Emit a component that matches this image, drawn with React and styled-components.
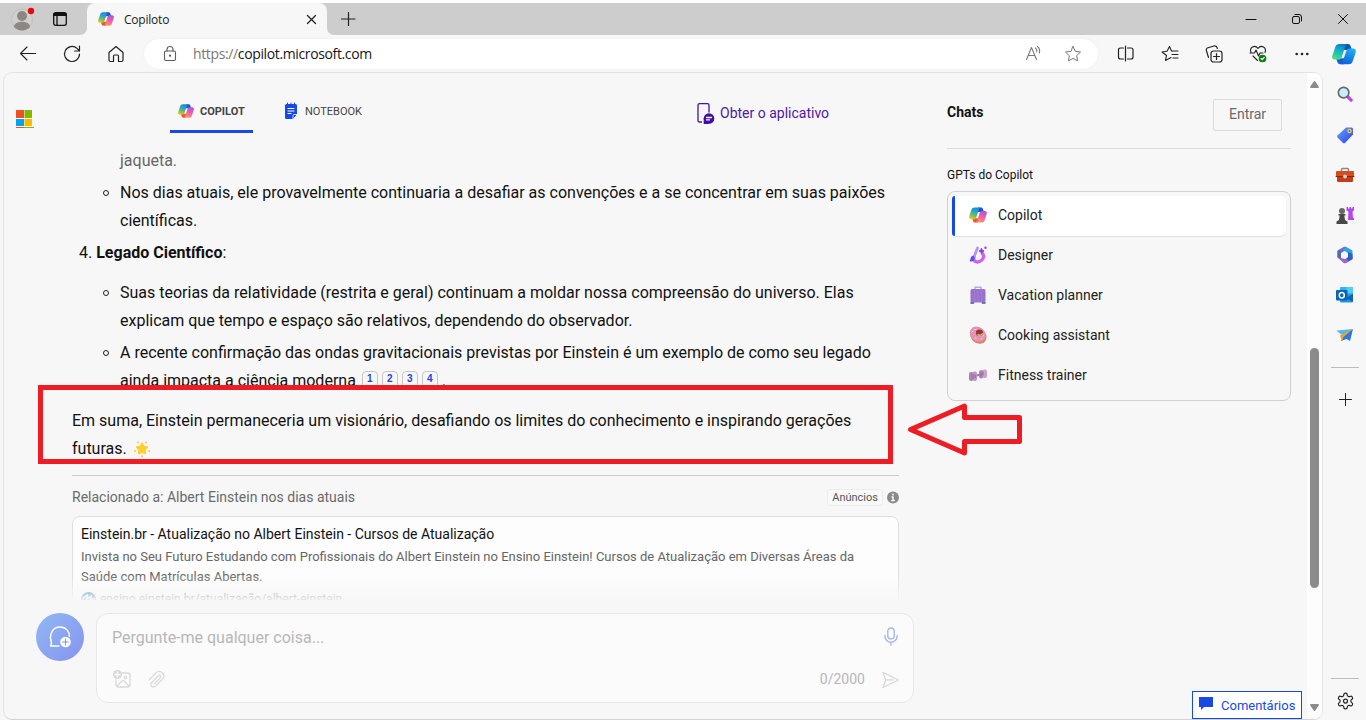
import React from "react";
import styled, { createGlobalStyle } from "styled-components";

const Global = createGlobalStyle`
  *, *::before { box-sizing: border-box; }
  body { margin: 0; background: #f7f7f7; font-family: Roboto, "Liberation Sans", sans-serif; overflow: hidden; }
`;

const UI_FONT = `"Open Sans", "Noto Sans", sans-serif`;

const Window = styled.div`
  width: 1366px; height: 720px; display: flex; flex-direction: column; position: relative;
  background: #f7f7f7; overflow: hidden; border-top: 3px solid #fff;
`;
const Icon = styled.svg`
  display: block; flex: none; overflow: visible;
  width: ${p => p.$w || 18}px; height: ${p => p.$h || p.$w || 18}px;
  fill: none; stroke: ${p => p.$c || "none"}; stroke-width: ${p => p.$s || 1};
  stroke-linecap: round; stroke-linejoin: round;
`;
const Cell = styled.div`
  width: ${p => p.$w || 44}px; height: ${p => p.$h || 37}px; flex: none;
  display: flex; align-items: center; justify-content: center;
`;

/* Title bar */
const TitleBar = styled.div` height: 32px; flex: none; display: flex; background: #f7f7f7; `;
const CapHolder = styled.div` width: 95px; margin-right: -8px; background: linear-gradient(#cdcdcd 50%, #f7f7f7 50%); `;
const LeftCap = styled.div`
  width: 87px; height: 32px; display: flex; align-items: center; background: #cdcdcd;
  border-bottom-right-radius: 7px; padding-left: 11px; gap: 19px;
`;
const TabHolder = styled.div` background: linear-gradient(#cdcdcd 50%, #f7f7f7 50%); width: 240px; `;
const Tab = styled.div`
  height: 32px; background: #f7f7f7; border-radius: 8px 8px 0 0; display: flex; align-items: center;
  padding: 0 11px 0 11px; font: 12px ${UI_FONT}; color: #1b1b1b;
`;
const TabTitle = styled.span` flex: 1; margin-left: 10px; letter-spacing: -0.22px; `;
const RightCap = styled.div`
  flex: 1; display: flex; align-items: center; background: #cdcdcd; border-bottom-left-radius: 7px; padding-left: 14px;
`;
const WindowButtons = styled.div` margin-left: auto; display: flex; `;

/* Toolbar */
const Toolbar = styled.div` height: 37px; flex: none; display: flex; padding-left: 6px; align-items: center; `;
const Address = styled.div`
  width: 954px; height: 30px; margin: 0 6px; border-radius: 15px; background: #fff; display: flex; align-items: center;
  padding: 0 16px 0 19px; font: 14px ${UI_FONT}; color: #161616; box-shadow: 0 0 2px #e8e8e8;
`;
const Url = styled.span` flex: 1; margin-left: 16px; letter-spacing: -0.37px; `;
const Scheme = styled.span` color: #777; `;
const AddressActions = styled.div` display: flex; gap: 22px; `;

/* Body */
const Body = styled.div` flex: 1; min-height: 0; display: flex; padding: 0 0 0 3px; `;
const Frame = styled.div`
  width: 1320px; border: 1px solid #e3e3e3; border-bottom-color: #d3d3d3; border-radius: 9px; overflow: hidden; display: flex; flex: none;
`;
const Main = styled.main` width: 943px; flex: none; display: flex; flex-direction: column; `;
const Header = styled.header` height: 73px; flex: none; display: flex; padding-left: 12px; `;
const MsLogo = styled.div` width: 154px; padding-top: 37px; `;
const NavTab = styled.div`
  width: ${p => p.$w}px; height: 40px; margin: 20px 0 0 ${p => p.$ml || 0}px; display: flex; align-items: center; gap: ${p => p.$gap || 6}px;
  padding: 0 0 1px 8px; font-size: 11px; font-weight: ${p => (p.$on ? 700 : 400)}; color: #444;
  border-bottom: 3px solid ${p => (p.$on ? "#174ae4" : "transparent")};
`;
const AppLink = styled.div`
  margin: 29px 0 0 290px; height: 22px; display: flex; align-items: center; gap: 5px; color: #4f17a5; font-size: 14px;
`;
const Scroller = styled.div`
  height: 454px; flex: none; overflow: hidden; position: relative; padding: 1px 0 0 68px; color: #111; font-size: 16px; line-height: 28px;
`;
const Line = styled.div` height: 28px; white-space: nowrap; `;
const Bullet = styled.div`
  padding-left: 48px; position: relative; margin-bottom: 4px; color: ${p => (p.$faded ? "#666" : "#111")};
  &::before {
    content: ""; display: ${p => (p.$faded ? "none" : "block")}; position: absolute; left: 31px; top: 11px;
    width: 6px; height: 6px; border: 1px solid #222; border-radius: 50%;
  }
`;
const Heading = styled.div` padding-left: 7px; height: 28px; margin-bottom: 12px; `;
const Cites = styled.span` margin-left: 2px; `;
const Cite = styled.sup`
  display: inline-block; width: 16px; height: 17px; margin-right: 4px; border: 1px solid #c6c6c6; border-radius: 4px; vertical-align: 4px;
  font: 700 10px/14px "Liberation Sans", sans-serif; color: #2443df; text-align: center;
`;
const Highlight = styled.div`
  position: relative; z-index: 1; width: 855px; height: 79px; margin: -14px 0 0 -34px; padding: 17px 0 0 29px;
  border: 5px solid #ee1c25; background: #f7f7f7;
`;
const StarLine = styled(Line)` display: flex; align-items: center; gap: 7px; `;
const Related = styled.div`
  margin-top: 11px; width: 827px; height: 41px; border-top: 1px solid #cbcbcb; display: flex; align-items: center;
  font-size: 14px; color: #6a6a6a; padding-top: 2px;
`;
const AdPill = styled.span`
  margin-left: auto; margin-right: 4px; height: 17px; border: 1px solid #ececec; border-radius: 4px; padding: 0 4px;
  font-size: 11px; line-height: 16px; color: #555; background: #f9f9f9;
`;
const Ad = styled.div`
  width: 827px; height: 110px; border: 1px solid #dfdfdf; border-radius: 8px; background: #fdfdfd; padding: 6px 8px;
`;
const AdTitle = styled.div` font-size: 14px; line-height: 22px; color: #111; margin-bottom: 2px; `;
const AdText = styled.div` font-size: 13px; line-height: 20px; color: #666; white-space: nowrap; `;
const AdUrl = styled(AdText)` display: flex; align-items: center; gap: 4px; height: 22px; font-size: 12px; padding-top: 2px; `;
const Fade = styled.div`
  position: absolute; left: 40px; right: 0; bottom: 0; height: 26px; background: linear-gradient(#f7f7f700, #f7f7f7e6);
`;
const Composer = styled.div` display: flex; padding: 13px 0 0 32px; gap: 12px; `;
const NewTopic = styled.div`
  width: 48px; height: 48px; border-radius: 50%; background: linear-gradient(135deg, #90b9f2, #8793f0);
  display: flex; align-items: center; justify-content: center;
`;
const Input = styled.div`
  width: 818px; height: 90px; border: 1px solid #e7e7e7; border-radius: 12px; background: #fbfbfb;
  padding: 9px 14px 9px 15px; display: flex; flex-direction: column; justify-content: space-between; color: #b7b7b7; font-size: 16px;
`;
const PromptRow = styled.div` display: flex; align-items: center; justify-content: space-between; height: 28px; padding-right: 1px; `;
const ToolRow = styled.div` display: flex; align-items: center; height: 28px; gap: 17px; padding-left: 1px; `;
const Counter = styled.span` margin-left: auto; font-size: 14px; letter-spacing: 0.02px; `;

const Aside = styled.aside` width: 360px; flex: none; display: flex; flex-direction: column; `;
const AsideTop = styled.div`
  width: 344px; height: 76px; border-bottom: 1px solid #dadada; display: flex; justify-content: space-between; padding: 26px 9px 0 0;
`;
const ChatsTitle = styled.div` font-size: 14px; font-weight: 700; color: #111; line-height: 26px; `;
const SignIn = styled.div`
  width: 69px; height: 32px; border: 1px solid #dadada; border-radius: 2px; color: #6a6a6a; font-size: 14px; line-height: 29px; text-align: center;
`;
const GptLabel = styled.div` height: 42px; padding-top: 18px; font-size: 12px; line-height: 16px; color: #111; `;
const GptList = styled.div` width: 344px; height: 210px; border: 1px solid #d1d1d1; border-radius: 8px; padding: 4px; `;
const GptItem = styled.div`
  height: 40px; display: flex; align-items: center; gap: 11px; padding: 0 0 2px 14px; font-size: 14px; color: #222;
  border-left: 3px solid ${p => (p.$on ? "#174ae4" : "transparent")}; border-radius: 3px 6px 6px 3px;
  background: ${p => (p.$on ? "#fff" : "transparent")}; box-shadow: ${p => (p.$on ? "0 1px 1px #dedede" : "none")};
`;
const Feedback = styled.div`
  width: 110px; height: 28px; margin: auto 0 0 245px; border: 1px solid #174ae4; background: #fff; color: #174ae4;
  display: flex; align-items: center; padding: 0 0 0 6px; gap: 8px; font-size: 13px;
`;
const FlagIcon = styled(Icon)` margin-top: -3px; `;
const Scrollbar = styled.div`
  width: 15px; background: #fdfdfd; display: flex; flex-direction: column; align-items: flex-start; padding: 8px 0 8px 3px;
`;
const Thumb = styled.div` width: 9px; height: 240px; margin-top: 260px; margin-bottom: auto; border-radius: 5px; background: #8b8b8b; `;

const Rail = styled.div` flex: 1; display: flex; flex-direction: column; align-items: center; padding: 2px 3px 0 0; `;
const RailLine = styled.div` width: 28px; height: 1px; flex: none; background: #bcbcbc; margin-top: ${p => p.$top || "0"}; `;

const Arrow = styled(Icon)` position: absolute; left: 905px; top: 397px; `;

const CopilotLogo = ({ size = 18, id, cool }) => (
  <Icon viewBox="0 0 24 24" $w={size}>
    <defs>
      <linearGradient id={id + "a"} x1="12" y1="1" x2="5" y2="19" gradientUnits="userSpaceOnUse">
        <stop offset="0" stopColor={cool ? "#0877bb" : "#1686dc"} />
        <stop offset=".4" stopColor={cool ? "#18a9cf" : "#27a8cf"} />
        <stop offset=".7" stopColor={cool ? "#27cf9f" : "#7fc14a"} />
        <stop offset="1" stopColor={cool ? "#5fdc7a" : "#f8c41f"} />
      </linearGradient>
      <linearGradient id={id + "b"} x1="20" y1="5" x2="13" y2="23" gradientUnits="userSpaceOnUse">
        <stop offset="0" stopColor={cool ? "#28b4ef" : "#a550ee"} />
        <stop offset=".5" stopColor={cool ? "#178ae8" : "#ed5daa"} />
        <stop offset="1" stopColor={cool ? "#1261d9" : "#ff9c66"} />
      </linearGradient>
    </defs>
    <g transform="translate(0 1) scale(1 .92)">
      <path d="M12 1h4c1.400 0 2.200 1 2.600 2.400L20 7.500H11.500z" fill={cool ? "#0a58b4" : "#1959cf"} />
      <path d="M12 23H8c-1.400 0-2.200-1-2.600-2.400L4 16.500H12.500z" fill={cool ? "#1460d8" : "#f0552f"} />
      <path d="M7.500 1H15.500c-1 0-1.600.8-2 2L9.700 15.400C9.200 17 8.200 18 6.500 18H3.300C.3 18-.3 15.800.4 13.500L3.200 4.500C3.900 2.200 5.200 1 7.500 1z" fill={`url(#${id}a)`} />
      <path d="M16.500 23H8.500c1 0 1.600-.8 2-2l3.800-12.400C14.800 7 15.800 6 17.500 6h3.200c3 0 3.600 2.200 2.900 4.500l-2.800 9c-.7 2.300-2 3.500-4.300 3.500z" fill={`url(#${id}b)`} />
    </g>
  </Icon>
);

const Avatar = () => (
  <Icon viewBox="0 0 23 23" $w={23}>
    <circle cx="11" cy="11.500" r="10.500" fill="#d2cfcc" stroke="#c2bfbc" />
    <circle cx="11" cy="8" r="5" fill="#8b8783" />
    <path d="M3 19c0-7 16-7 16 0-4 4.500-12 4.500-16 0z" fill="#8b8783" />
    <circle cx="20" cy="3" r="3.200" fill="#e60c0c" />
  </Icon>
);

const gpts = [
  ["Copilot", <CopilotLogo size={18} id="g" />],
  ["Designer",
    <Icon viewBox="0 0 18 18" $w={18}>
      <path d="M5 10.500c-1.500 4.500 2 6.300 5.500 5 4-1.500 5-5 3-8" stroke="#cf62f3" strokeWidth="3.400" />
      <path d="M8.500 2L5 11" stroke="#b596f2" strokeWidth="2.800" />
      <path d="M3.500 10c2 0 3 2 1.500 4-1 1.500-3 2-4.500 1 1.500-1 .5-4.500 3-5z" fill="#5f52e2" />
      <path d="M12.500 2.500l.7 1.700 1.800.8-1.800.8-.7 1.700-.8-1.700-1.700-.8 1.700-.8z" fill="#7c3de4" stroke="#7c3de4" /><circle cx="16.500" cy="1.800" r="1.200" fill="#8951e7" />
    </Icon>],
  ["Vacation planner",
    <Icon viewBox="0 0 18 18" $w={18}>
      <path d="M6 3V1.200h6V3" stroke="#a9b6d3" strokeWidth="1.500" />
      <rect x="1.500" y="3" width="15" height="13.500" rx="1.500" fill="#9872cd" />
      <path d="M5.500 4.500v11M9 4.500v11M12.500 4.500v11" stroke="#a27dd5" strokeWidth=".9" /><path d="M2 17h2.500M13.500 17H16" stroke="#355b91" strokeWidth="1.600" />
    </Icon>],
  ["Cooking assistant",
    <Icon viewBox="0 0 18 18" $w={18}>
      <ellipse cx="9.500" cy="10" rx="8.500" ry="7.300" fill="#d0895a" transform="rotate(35 9.500 10)" />
      <ellipse cx="9" cy="8.200" rx="8.600" ry="7" fill="#e692b4" transform="rotate(35 9 8)" />
      <ellipse cx="10.500" cy="6.800" rx="3.600" ry="3.200" fill="#963a2f" /><path d="M9 8.500c1.500 1.300 3.500.8 4.300-.8" stroke="#eabb8c" strokeWidth="1.300" />
      <path d="M3 6l1-.8M6 12l1 .5M12 13l1-.6M6 3.500h1M14 10l.5-1" stroke="#fbd9e6" />
    </Icon>],
  ["Fitness trainer",
    <Icon viewBox="0 0 18 18" $w={18}>
      <path d="M6 10l7-2" stroke="#8d8698" strokeWidth="2" />
      <rect x="0" y="6" width="4.500" height="9" rx="2" fill="#ad83b3" /><rect x="3.500" y="5.500" width="4.500" height="9.500" rx="2" fill="#c095c6" />
      <rect x="10" y="4" width="4.500" height="8.500" rx="2" fill="#b189b8" /><rect x="13.500" y="3.500" width="4.500" height="8.500" rx="2" fill="#cda0d0" />
      <path d="M4 8.500v4M6.200 9v2.500M12 7v3M14 6v3" stroke="#80618d" strokeWidth=".9" />
    </Icon>],
];

const STAR = "M9 1.500l2.300 4.800 5.200.7-3.800 3.700.9 5.200L9 13.400l-4.600 2.500.9-5.200L1.500 7l5.200-.7z";

const RailIcons = () => (
  <>
    <Cell $h={40}><Icon viewBox="0 0 18 18" $w={17}>
      <path d="M11 11l5 5" stroke="#c43df0" strokeWidth="3.200" strokeLinecap="butt" /><circle cx="7" cy="7" r="5.600" fill="#c9ecff" stroke="#666" strokeWidth="1.700" />
    </Icon></Cell>
    <Cell $h={41}><Icon viewBox="0 0 18 18" $w={18}>
      <defs><linearGradient id="tg" x2="1" y2="1"><stop stopColor="#69a4ff" /><stop offset="1" stopColor="#293fe5" /></linearGradient></defs>
      <path d="M10 1.500h5.500q1.500 0 1.500 1.500v5.500L9 17q-1 .8-2 0L1.500 11.500q-.8-1 0-2z" fill="url(#tg)" /><circle cx="13.500" cy="5" r="1.600" fill="#3b67df" stroke="#ffd23b" strokeWidth="1.300" />
    </Icon></Cell>
    <Cell $h={40}><Icon viewBox="0 0 18 18" $w={18}>
      <path d="M5.500 6V3.500q0-1 1-1h5q1 0 1 1V6" stroke="#888" strokeWidth="1.500" /><rect y="5" width="18" height="6" rx="1" fill="#d64d1c" /><path d="M1 10.500h16V15q0 1-1 1H2q-1 0-1-1z" fill="#c13f17" /><path d="M0 10.500h18" stroke="#87270d" /><circle cx="9" cy="10.500" r="2" fill="#c9cfd3" />
    </Icon></Cell>
    <Cell $h={40}><Icon viewBox="0 0 18 18" $w={18}>
      <path d="M10.500 1h1.500v1.500h1.500V1H15v1.500h1.500V1H18v3.500l-1.500 1L17 12h1v2h-6l.5-8.500-2-1z" fill="#b445f0" /><circle cx="6" cy="5" r="3" fill="#676767" /><path d="M2.500 8h7v1.500H8.300L9 14l2.500 1.500V18H.5v-2.500L3 14l.7-4.500H2.500z" fill="#484848" />
    </Icon></Cell>
    <Cell $h={40}><Icon viewBox="0 0 18 18" $w={18}>
      <path d="M8 .8L1.500 4.500v7L5 13.500V7l5-3V.8z" fill="#736bd3" /><path d="M10 .8l6.500 3.700v8L12 10V7L7 4z" fill="#29a8dc" /><path d="M1.500 11.500L8 17.200h2l6.500-4v-3L9 13l-4-1z" fill="#9869cc" /><path d="M12 6l4.500 2v5l-4 2.300-2.500-3 2-1z" fill="#315fbd" /><path d="M5 4v8.500L1.500 11V5z" fill="#536dac" />
    </Icon></Cell>
    <Cell $h={40}><Icon viewBox="0 0 18 18" $w={18}>
      <rect x="4" y="1" width="13" height="12" rx="1" fill="#31b4e9" /><path d="M10.500 1H17v6h-6.500z" fill="#52cef5" /><path d="M4 9l13-1v7q0 1.500-1.500 1.500H5Q4 16.500 4 15z" fill="#2297df" /><path d="M10 12l7-4v8z" fill="#165fa9" /><rect y="4" width="11.500" height="10.500" rx="1" fill="#0864b8" /><ellipse cx="5.800" cy="9.200" rx="2.500" ry="2.800" stroke="#fff" strokeWidth="1.500" />
    </Icon></Cell>
    <Cell $h={40}><Icon viewBox="0 0 18 18" $w={18}>
      <path d="M.5 4.500L17 3l-7.500 6-4.500-.5z" fill="#55b9ef" /><path d="M17 3l-3 12-3.500-2L5 15l2.500-6z" fill="#277bdf" /><path d="M17 3L4 9.500l2 5.500 1.500-4z" fill="#f4a11e" />
    </Icon></Cell>
  </>
);

export default function App() {
  return (
    <Window>
      <Global />
      <TitleBar>
        <CapHolder>
          <LeftCap>
            <Avatar />
            <Icon viewBox="0 0 14 14" $w={14} $c="#111" $s={1.3}><rect x=".7" y=".7" width="12.600" height="12.600" rx="2" /><path d="M1.500 2.500h11" strokeWidth="3" /><path d="M4 4v9" /></Icon>
          </LeftCap>
        </CapHolder>
        <TabHolder>
          <Tab>
            <CopilotLogo id="t" size={16} />
            <TabTitle>Copiloto</TabTitle>
            <Icon viewBox="0 0 10 10" $w={9} $c="#222" $s={1.4}><path d="M.5.5l9 9M9.500.5l-9 9" /></Icon>
          </Tab>
        </TabHolder>
        <RightCap>
          <Icon viewBox="0 0 14 14" $w={14} $c="#222" $s={1.2}><path d="M7.500 .5v13M.5 7h13.500" /></Icon>
          <WindowButtons>
            <Cell $w={46} $h={32}><Icon viewBox="0 0 10 10" $w={10} $c="#111"><path d="M0 5.500h10" /></Icon></Cell>
            <Cell $w={46} $h={32}><Icon viewBox="0 0 10 10" $w={10} $c="#111"><rect x=".5" y="2.500" width="7" height="7" rx="1.500" /><path d="M3 .5h4q2.500 0 2.500 2.500v4" /></Icon></Cell>
            <Cell $w={46} $h={32}><Icon viewBox="0 0 10 10" $w={10} $c="#111"><path d="M.5.5l9 9M9.500.5l-9 9" /></Icon></Cell>
          </WindowButtons>
        </RightCap>
      </TitleBar>

      <Toolbar>
        <Cell><Icon viewBox="0 0 18 18" $c="#222" $s={1.1}><path d="M16.500 8.500H1.500M8 2L1.500 8.500 8 15" /></Icon></Cell>
        <Cell><Icon viewBox="0 0 18 18" $c="#222" $s={1.2}><path d="M16.500 9A7.500 7.500 0 1 1 14 3.400L16.500 6M16.500 1v5h-5" /></Icon></Cell>
        <Cell><Icon viewBox="0 0 18 18" $c="#222" $s={1.2}><path d="M2 7.500L9 1.500l7 6V15q0 1.500-1.500 1.500h-3V11q0-1-1-1h-3q-1 0-1 1v5.500h-3Q2 16.500 2 15z" /></Icon></Cell>
        <Address>
          <Icon viewBox="0 0 14 16" $w={14} $h={16} $c="#5c5c5c" $s={1.1}><rect x="1.500" y="5" width="11" height="9.500" rx="1.500" /><path d="M4 5V3.500q0-3 3-3t3 3V5" /><circle cx="7" cy="9.700" r=".6" fill="#555" /></Icon>
          <Url><Scheme>https://</Scheme>copilot.microsoft.com</Url>
          <AddressActions>
            <Icon viewBox="0 0 18 18" $c="#777" $s={1.1}><path d="M2.500 14.500L7.500 2.500l5 12M4.500 10.500h6M11.500 3q1.800 1.500 1.300 4M13.500 1.500q3 2.500 1.800 6.500" /></Icon>
            <Icon viewBox="0 0 18 18" $c="#777"><path d={STAR} /></Icon>
          </AddressActions>
        </Address>
        <Cell><Icon viewBox="0 0 18 18" $c="#222" $s={1.2}><path d="M6.500 3H3.500Q1.500 3 1.500 5v7q0 2 2 2h3M10.500 3h3.500q2 0 2 2v7q0 2-2 2h-3.500M8.500 1v15" /></Icon></Cell>
        <Cell><Icon viewBox="0 0 18 18" $c="#222" $s={1.1}><path d="M10 12.500l-5.500 3 1-5L1 7l5-.7 2.500-4.800L10.500 6H17M11 9.500h6M12 13h5" /></Icon></Cell>
        <Cell><Icon viewBox="0 0 18 18" $c="#222" $s={1.2}><rect x="6" y="6" width="11" height="11" rx="2.500" /><path d="M11.500 8.500v6M8.500 11.500h6M3.500 12.500L1.500 6q-.8-2.500 1.500-3.200l6-1.800q2-.5 3 1.500l.4 1" /></Icon></Cell>
        <Cell><Icon viewBox="0 0 18 18" $c="#222" $s={1.1}><path d="M2 7.500C0 2 6-.5 9 3.500 12-.5 18 2 16 7.500M1 8h4.500L7 5l2.500 6L11 8h3M4 11l4.500 4.500" /><circle cx="13.500" cy="13.500" r="3.300" fill="#107c10" stroke="#107c10" /><path d="M12 13.500l1.200 1.200 2-2.400" stroke="#fff" /></Icon></Cell>
        <Cell><Icon viewBox="0 0 14 4" $w={14} $h={4}><circle cx="1.700" cy="2" r="1.300" fill="#222" /><circle cx="7" cy="2" r="1.300" fill="#222" /><circle cx="12.300" cy="2" r="1.300" fill="#222" /></Icon></Cell>
        <Cell $w={40}><CopilotLogo id="s" size={24} cool /></Cell>
      </Toolbar>

      <Body>
        <Frame>
          <Main>
            <Header>
              <MsLogo>
                <Icon viewBox="0 0 18 18" $w={18}><path d="M0 0h8v8H0z" fill="#f25022" /><path d="M8.500 0H16v8H8.500z" fill="#7fba00" /><path d="M0 9h8v7H0z" fill="#00a4ef" /><path d="M8.500 9H16v7H8.500z" fill="#ffb900" /><path d="M0 17h8v1H0z" fill="#f25022" /><path d="M8 17h10v1H8z" fill="#7fba00" /></Icon>
              </MsLogo>
              <NavTab $w={83} $on><CopilotLogo id="n" size={16} />COPILOT</NavTab>
              <NavTab $w={130} $ml={24} $gap={8}>
                <Icon viewBox="0 0 12 16" $w={12} $h={16}><path d="M1.500 1h9Q12 1 12 2.500V11l-4 5H1.500Q0 16 0 14.500v-12Q0 1 1.500 1z" fill="#174ae4" /><path d="M8 16v-3.500q0-1 1-1h3z" fill="#174ae4" stroke="#f7f7f7" strokeWidth=".8" /><path d="M3 5.500h6M3 8h6M3 10.500h3" stroke="#fff" /><path d="M2.500 0v1.500M6 0v1.500M9.500 0v1.500" stroke="#174ae4" /></Icon>
                NOTEBOOK
              </NavTab>
              <AppLink>
                <Icon viewBox="0 0 18 21" $w={18} $h={21} $c="#4a12a3" $s={1.3}><path d="M4.500 19H2.500Q1 19 1 17.500V2Q1 .7 2.500.7h8Q12 .7 12 2v7" /><circle cx="12" cy="15.500" r="5.300" fill="#43109d" stroke="none" /><path d="M6.700 15v6H12z" fill="#43109d" stroke="none" /><path d="M9.500 14.500h5M9.500 16.800h3" stroke="#fff" /></Icon>
                Obter o aplicativo
              </AppLink>
            </Header>
            <Scroller>
              <Bullet $faded><Line>jaqueta.</Line></Bullet>
              <Bullet><Line>Nos dias atuais, ele provavelmente continuaria a desafiar as convenções e a se concentrar em suas paixões</Line><Line>científicas.</Line></Bullet>
              <Heading>4. <b>Legado Científico</b>:</Heading>
              <Bullet><Line>Suas teorias da relatividade (restrita e geral) continuam a moldar nossa compreensão do universo. Elas</Line><Line>explicam que tempo e espaço são relativos, dependendo do observador.</Line></Bullet>
              <Bullet><Line>A recente confirmação das ondas gravitacionais previstas por Einstein é um exemplo de como seu legado</Line><Line>ainda impacta a ciência moderna <Cites><Cite>1</Cite><Cite>2</Cite><Cite>3</Cite><Cite>4</Cite></Cites>.</Line></Bullet>
              <Highlight>
                <Line>Em suma, Einstein permaneceria um visionário, desafiando os limites do conhecimento e inspirando gerações</Line>
                <StarLine>futuras.
                  <Icon viewBox="0 0 18 18" $w={16}><path d="M9 2.800l1.900 3.400 4 .8-2.700 3 .4 4L9 12.400 5.400 14l.4-4-2.700-3 4-.8z" fill="#ffd02f" stroke="#ffd02f" strokeWidth="2" /><path d="M4.500 1.500v.3M13.500 1.500v.3M1 11v.3M17 11v.3M9 17v.3" stroke="#fdc02f" strokeWidth="2" /></Icon>
                </StarLine>
              </Highlight>
              <Related>
                Relacionado a: Albert Einstein nos dias atuais
                <AdPill>Anúncios</AdPill>
                <Icon viewBox="0 0 12 12" $w={12}><circle cx="6" cy="6.500" r="6" fill="#8b8b8b" /><path d="M5 6h1v3.500M4.800 9.500h2.600" stroke="#fff" strokeWidth="1.300" /><circle cx="6" cy="3.500" r=".9" fill="#fff" /></Icon>
              </Related>
              <Ad>
                <AdTitle>Einstein.br - Atualização no Albert Einstein - Cursos de Atualização</AdTitle>
                <AdText>Invista no Seu Futuro Estudando com Profissionais do Albert Einstein no Ensino Einstein! Cursos de Atualização em Diversas Áreas da</AdText>
                <AdText>Saúde com Matrículas Abertas.</AdText>
                <AdUrl><Icon viewBox="0 0 16 16" $w={15}><circle cx="8" cy="8" r="8" fill="#2877ae" /><path d="M2 7l5-4-1 5 5-4-1 4 4-1" stroke="#fff" strokeWidth="1.500" /></Icon>ensino.einstein.br/atualização/albert-einstein</AdUrl>
              </Ad>
              <Fade />
            </Scroller>
            <Composer>
              <NewTopic>
                <Icon viewBox="0 0 22 22" $w={22} $c="#fff" $s={1.4}><path d="M10 20H1.500l1-3.500C-.5 8 4 1 11 1c6 0 9.500 4.500 9.500 9.500" /><circle cx="16.500" cy="16" r="5.300" fill="#fff" stroke="none" /><path d="M16.500 13v6M13.500 16h6" stroke="#7897eb" strokeWidth="1.100" /></Icon>
              </NewTopic>
              <Input>
                <PromptRow>
                  Pergunte-me qualquer coisa...
                  <Icon viewBox="0 0 14 18" $w={14} $h={18} $c="#a2b4f1" $s={1.3}><rect x="3.800" y="0" width="6.400" height="11" rx="3.200" /><path d="M.8 7.500c0 9 12.400 9 12.400 0M7 14.200v3" /></Icon>
                </PromptRow>
                <ToolRow>
                  <Icon viewBox="0 0 18 18" $w={18} $c="#d9d9d9" $s={1.3}><path d="M9 3h5.500Q17 3 17 5.500v9q0 2.500-2.500 2.500h-9Q3 17 3 14.500V10M4 16l5-5q1-1 2 0l5 5" /><circle cx="12.500" cy="7.500" r="1.200" /><circle cx="4.500" cy="4.500" r="4.500" fill="#d9d9d9" stroke="none" /><path d="M4.500 2v5M2 4.500h5" stroke="#fff" /></Icon>
                  <Icon viewBox="0 0 18 18" $w={17} $c="#d9d9d9" $s={1.3}><path d="M1 9.500l7.500-7.500c4.500-4 11 1.500 7 6.500L8.500 15.500c-3.500 3.500-7.500-.5-4.500-3.500L10.500 5.500c2-2 4 0 2.200 2L6.500 13.700" /></Icon>
                  <Counter>0/2000</Counter>
                  <Icon viewBox="0 0 18 18" $w={17} $c="#d8d8d8" $s={1.3}><path d="M1 1.500L17.500 9.500 1 17.500 4 9.500zM4 9.500h8" /></Icon>
                </ToolRow>
              </Input>
            </Composer>
          </Main>
          <Aside>
            <AsideTop><ChatsTitle>Chats</ChatsTitle><SignIn>Entrar</SignIn></AsideTop>
            <GptLabel>GPTs do Copilot</GptLabel>
            <GptList>{gpts.map(([name, icon], i) => <GptItem key={name} $on={i === 0}>{icon}{name}</GptItem>)}</GptList>
            <Feedback><FlagIcon viewBox="0 0 14 13" $w={14} $h={13}><path d="M0 0h14v10H5l-3 3v-3H0z" fill="#174ae4" /></FlagIcon>Comentários</Feedback>
          </Aside>
          <Scrollbar>
            <Icon viewBox="0 0 9 7" $w={9} $h={7}><path d="M4.500 0q.5 0 .8.500L9 6q0 1-1 1H1q-1 0-1-1L3.700.5q.3-.5.8-.5z" fill="#8b8b8b" /></Icon>
            <Thumb />
            <Icon viewBox="0 0 9 7" $w={9} $h={7}><path d="M4.500 7q.5 0 .8-.5L9 1q0-1-1-1H1Q0 0 0 1l3.700 5.500q.3.500.8.500z" fill="#8b8b8b" /></Icon>
          </Scrollbar>
        </Frame>
        <Rail>
          <RailIcons />
          <RailLine $top="12px" />
          <Cell $h={63}><Icon viewBox="0 0 13 13" $w={13} $c="#222"><path d="M6.500.5v12M.5 6.500h12" /></Icon></Cell>
          <RailLine $top="auto" />
          <Cell $h={41}><Icon viewBox="0 -2 24 24" $w={19} $c="#222" $s={1.5}><path d="M12.200 2h-.4a2 2 0 0 0-2 2v.2a2 2 0 0 1-1 1.700l-.4.300a2 2 0 0 1-2 0l-.2-.1a2 2 0 0 0-2.700.7l-.2.400a2 2 0 0 0 .7 2.700l.2.100a2 2 0 0 1 1 1.700v.500a2 2 0 0 1-1 1.700l-.2.100a2 2 0 0 0-.7 2.700l.2.400a2 2 0 0 0 2.700.7l.2-.1a2 2 0 0 1 2 0l.4.300a2 2 0 0 1 1 1.700v.200a2 2 0 0 0 2 2h.4a2 2 0 0 0 2-2v-.2a2 2 0 0 1 1-1.700l.4-.3a2 2 0 0 1 2 0l.2.100a2 2 0 0 0 2.700-.7l.2-.4a2 2 0 0 0-.7-2.700l-.2-.1a2 2 0 0 1-1-1.700v-.5a2 2 0 0 1 1-1.700l.2-.1a2 2 0 0 0 .7-2.700l-.2-.4a2 2 0 0 0-2.700-.7l-.2.100a2 2 0 0 1-2 0l-.4-.3a2 2 0 0 1-1-1.700V4a2 2 0 0 0-2-2z" /><circle cx="12" cy="12" r="2.500" /></Icon></Cell>
        </Rail>
      </Body>

      <Arrow viewBox="905 400 120 60" $w={120} $h={60} $c="#ee1c25" $s={5}>
        <path d="M910.500 429.500L964.500 406V417.500H1019.500V441.500H964.500V453z" />
      </Arrow>
    </Window>
  );
}
